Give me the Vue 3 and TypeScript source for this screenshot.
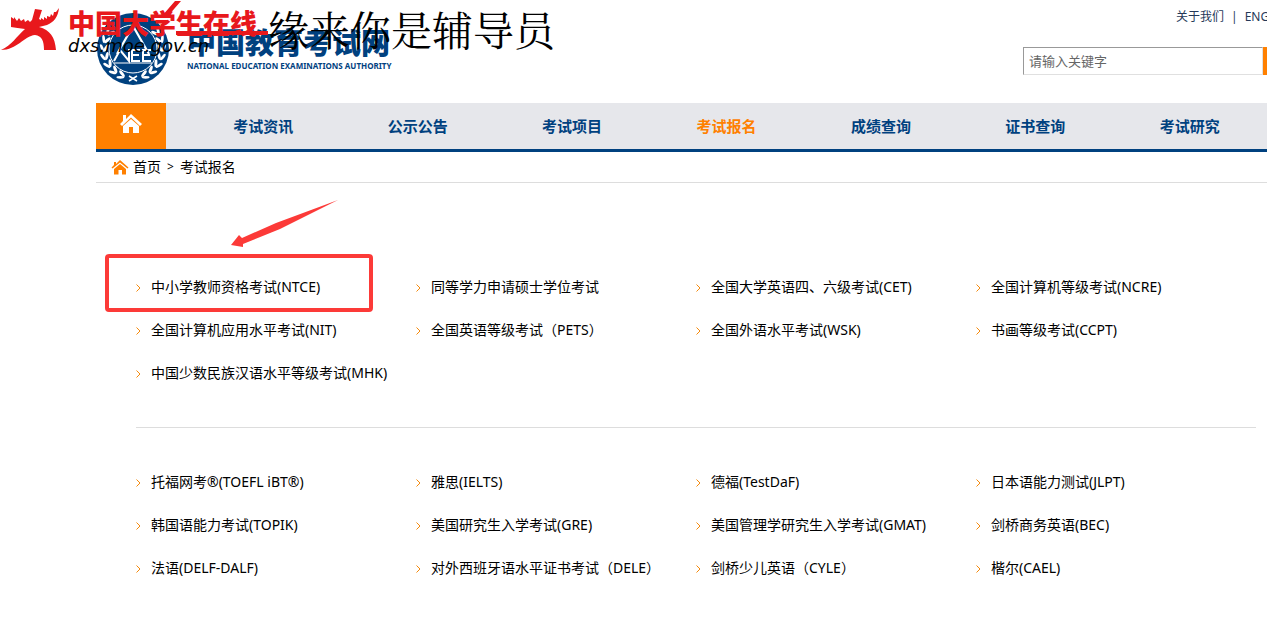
<script setup lang="ts">
const navItems: string[] = ['考试资讯', '公示公告', '考试项目', '考试报名', '成绩查询', '证书查询', '考试研究']
const activeItem = '考试报名'

const examGroups: string[][] = [
  [
    '中小学教师资格考试(NTCE)',
    '同等学力申请硕士学位考试',
    '全国大学英语四、六级考试(CET)',
    '全国计算机等级考试(NCRE)',
    '全国计算机应用水平考试(NIT)',
    '全国英语等级考试（PETS）',
    '全国外语水平考试(WSK)',
    '书画等级考试(CCPT)',
    '中国少数民族汉语水平等级考试(MHK)',
  ],
  [
    '托福网考®(TOEFL iBT®)',
    '雅思(IELTS)',
    '德福(TestDaF)',
    '日本语能力测试(JLPT)',
    '韩国语能力考试(TOPIK)',
    '美国研究生入学考试(GRE)',
    '美国管理学研究生入学考试(GMAT)',
    '剑桥商务英语(BEC)',
    '法语(DELF-DALF)',
    '对外西班牙语水平证书考试（DELE）',
    '剑桥少儿英语（CYLE）',
    '楷尔(CAEL)',
  ],
]

// Laurel leaves around the emblem, as angles in degrees from the bottom
const leafAngles: number[] = [24, 41, 58, 75, 92, 109, 126]
</script>

<template>
  <div class="page">
    <header class="header">
      <a class="brand" href="#">
        <svg class="emblem" viewBox="0 0 72 72" aria-hidden="true">
          <circle cx="36" cy="36" r="36" fill="#00417f" />
          <g fill="#fff">
            <g v-for="a in leafAngles" :key="a">
              <g :transform="`rotate(${a} 36 36)`">
                <ellipse cx="36" cy="63" rx="4" ry="1.5" transform="rotate(28 36 63)" />
                <ellipse cx="36" cy="67" rx="4" ry="1.4" transform="rotate(-24 36 67)" />
              </g>
              <g :transform="`rotate(${-a} 36 36)`">
                <ellipse cx="36" cy="63" rx="4" ry="1.5" transform="rotate(-28 36 63)" />
                <ellipse cx="36" cy="67" rx="4" ry="1.4" transform="rotate(24 36 67)" />
              </g>
            </g>
          </g>
          <circle cx="36" cy="36" r="24" fill="#00417f" stroke="#fff" stroke-width="1" />
          <path d="M36 13L20 41M36 13L52 41" fill="none" stroke="#fff" stroke-width="2.2" />
          <path d="M17 50H55" fill="none" stroke="#fff" stroke-width="1" />
          <path d="M32 68l8-5M40 68l-8-5" stroke="#fff" stroke-width="1.5" />
          <path
            d="M17 48L23 37L32 48V36M43 37H35V48H43M35 42H42M54 37H46V48H54M46 42H53"
            fill="none"
            stroke="#fff"
            stroke-width="2"
          />
        </svg>
        <span class="brand-text">
          <span class="brand-cn">中国教育考试网</span>
          <span class="brand-en">NATIONAL EDUCATION EXAMINATIONS AUTHORITY</span>
        </span>
      </a>
      <div class="tools">
        <div class="top-links"><a href="#">关于我们</a><span>|</span><a href="#">ENGLISH</a></div>
        <form class="search" @submit.prevent>
          <input type="text" placeholder="请输入关键字" aria-label="请输入关键字" />
          <button type="submit" aria-label="搜索"></button>
        </form>
      </div>
    </header>

    <nav class="nav">
      <a class="home" href="#" aria-label="首页">
        <svg viewBox="0 0 22 20" aria-hidden="true">
          <path d="M3 2h3v4l5-5 11 10-2 2L11 4.500 2 13 0 11 3 8Z" fill="#fff" />
          <path d="M11 6l8 7v7h-6v-6H9v6H3v-7Z" fill="#fff" />
        </svg>
      </a>
      <ul>
        <li v-for="item in navItems" :key="item">
          <a href="#" :class="{ active: item === activeItem }">{{ item }}</a>
        </li>
      </ul>
    </nav>

    <div class="crumbs">
      <svg viewBox="0 0 18 15" aria-hidden="true">
        <path d="M3 2h2v2l4-4 8.500 7.500-1 1L9 2.500 1.500 8.500 0.500 7.500 3 5Z" fill="#ff8000" />
        <path d="M9 4l6 5v5.500h-4V10H7.500v4.500H3V9Z" fill="#ff8000" />
      </svg>
      <a href="#">首页</a><span class="sep">&gt;</span><a href="#">考试报名</a>
    </div>

    <main class="exams">
      <ul v-for="(group, g) in examGroups" :key="g">
        <li v-for="name in group" :key="name">
          <svg viewBox="0 0 5 8" aria-hidden="true">
            <path d="M0.500 0.500L4 4L0.500 7.500" fill="none" stroke="#f58a0c" />
          </svg>
          <a href="#">{{ name }}</a>
        </li>
      </ul>
    </main>

    <div class="mark">
      <svg class="mark-logo" viewBox="0 0 60 44" aria-hidden="true">
        <path
          d="M35 1L42 2L39 11L41 12L41 10L44 12L44 9L47 11L47 8L50 9L51 6L53 8L54 4L56 4L59 0C58 9 54 14 47 17L39 19C50 22 55 29 56 42H44C44 33 42 28 35 27C24 28 17 42 1 42C12 37 16 29 25 21C20 20 15 20 11 19L11 9L14 11L14 9L17 13L19 10L21 13L24 11L25 14L28 12L30 14L32 12Z"
          fill="#e8181c"
        />
      </svg>
      <div class="mark-site">
        <span class="mark-name">中国大学生在线</span>
        <span class="mark-url">dxs.moe.gov.cn</span>
        <svg class="mark-strokes" viewBox="0 0 200 36" aria-hidden="true">
          <path d="M107 0h6L100 15h-6ZM108 30H200v4H108Z" fill="#e8181c" />
        </svg>
      </div>
      <span class="mark-author">缘来你是辅导员</span>
    </div>

    <div class="highlight"></div>
    <svg class="arrow" viewBox="0 0 108 48" aria-hidden="true">
      <path d="M108 0L46 23L12 38L9 35L1 45L13 47L13 44L50 29Z" fill="#fc3a38" />
    </svg>
  </div>
</template>

<style>
body {
  margin: 0;
  background: #fff;
}
</style>

<style scoped>
.page {
  position: relative;
  overflow: hidden;
  padding-left: 96px;
  padding-bottom: 50px;
  font: 14px/20px "Noto Sans", "Noto Sans CJK SC", sans-serif;
  color: #000;
}
a {
  color: inherit;
  text-decoration: none;
}
ul {
  margin: 0;
  padding: 0;
  list-style: none;
}
.header {
  display: flex;
  justify-content: space-between;
  height: 103px;
}
.brand {
  display: flex;
  gap: 18px;
  padding: 13px 0 0 1px;
  color: #00417f;
}
.emblem {
  width: 72px;
  height: 72px;
}
.brand-text {
  display: flex;
  flex-direction: column;
  padding-top: 11px;
  white-space: nowrap;
}
.brand-cn {
  font: 900 29px/34px "Noto Sans CJK SC", sans-serif;
}
.brand-en {
  font: bold 8px/16px "Noto Sans", sans-serif;
}
.tools {
  width: 244px;
}
.top-links {
  display: flex;
  gap: 7px;
  padding: 7px 0 0 153px;
  white-space: nowrap;
  font-size: 12px;
  color: #253858;
}
.search {
  display: flex;
  margin-top: 20px;
}
.search input {
  box-sizing: border-box;
  flex: 1;
  min-width: 0;
  height: 28px;
  padding: 0 5px;
  border: 1px solid #999;
  border-right-color: #e0e0e0;
  border-bottom-color: #e0e0e0;
  font: 13px "Noto Sans", "Noto Sans CJK SC", sans-serif;
}
.search input::placeholder {
  color: #666;
  opacity: 1;
}
.search button {
  width: 4px;
  padding: 0;
  border: 0;
  background: #ff8000;
}
.nav {
  display: flex;
  height: 46px;
  border-bottom: 3px solid #00417f;
  background: #e6e7eb;
}
.home {
  display: flex;
  justify-content: center;
  width: 70px;
  background: #ff8000;
}
.home svg {
  width: 22px;
  height: 20px;
  margin-top: 10px;
}
.nav ul {
  display: flex;
  flex: 1;
  padding-left: 20px;
}
.nav li {
  flex: 1;
  text-align: center;
  font-size: 15px;
  font-weight: bold;
  line-height: 46px;
  color: #00417f;
}
.active {
  color: #ff8000;
}
.crumbs {
  display: flex;
  align-items: center;
  height: 30px;
  padding-left: 15px;
  border-bottom: 1px solid #ddd;
}
.crumbs svg {
  width: 18px;
  height: 15px;
  margin-right: 4px;
}
.sep {
  margin: 0 6px;
  font-size: 12px;
}
.exams {
  padding: 82px 11px 0 40px;
}
.exams ul {
  display: grid;
  grid-template-columns: repeat(4, 1fr);
}
.exams ul + ul {
  margin-top: 33px;
  padding-top: 32px;
  border-top: 1px solid #ddd;
}
.exams li {
  display: flex;
  align-items: center;
  gap: 10px;
  height: 43px;
  white-space: nowrap;
}
.exams li svg {
  width: 5px;
  height: 8px;
  margin-top: 2px;
}
.mark {
  position: absolute;
  top: 0;
  left: 0;
  display: flex;
  white-space: nowrap;
}
.mark-logo {
  width: 60px;
  height: 44px;
  margin-top: 8px;
}
.mark-site {
  position: relative;
  display: flex;
  flex-direction: column;
  width: 200px;
  padding: 7px 0 0 8px;
}
.mark-name {
  font: 900 27px/32px "Noto Sans CJK SC", sans-serif;
  color: #e8181c;
}
.mark-url {
  font: italic 18px/14px "DejaVu Sans", sans-serif;
}
.mark-strokes {
  position: absolute;
  top: 1px;
  left: 8px;
  width: 200px;
  height: 36px;
}
.mark-author {
  font: 400 41px/58px "Noto Serif CJK SC", "Noto Sans CJK SC", serif;
}
.highlight {
  position: absolute;
  top: 254px;
  left: 105px;
  box-sizing: border-box;
  width: 268px;
  height: 58px;
  border: 4px solid #fc3a38;
  border-radius: 4px;
  pointer-events: none;
}
.arrow {
  position: absolute;
  top: 200px;
  left: 230px;
  width: 108px;
  height: 48px;
}
</style>
